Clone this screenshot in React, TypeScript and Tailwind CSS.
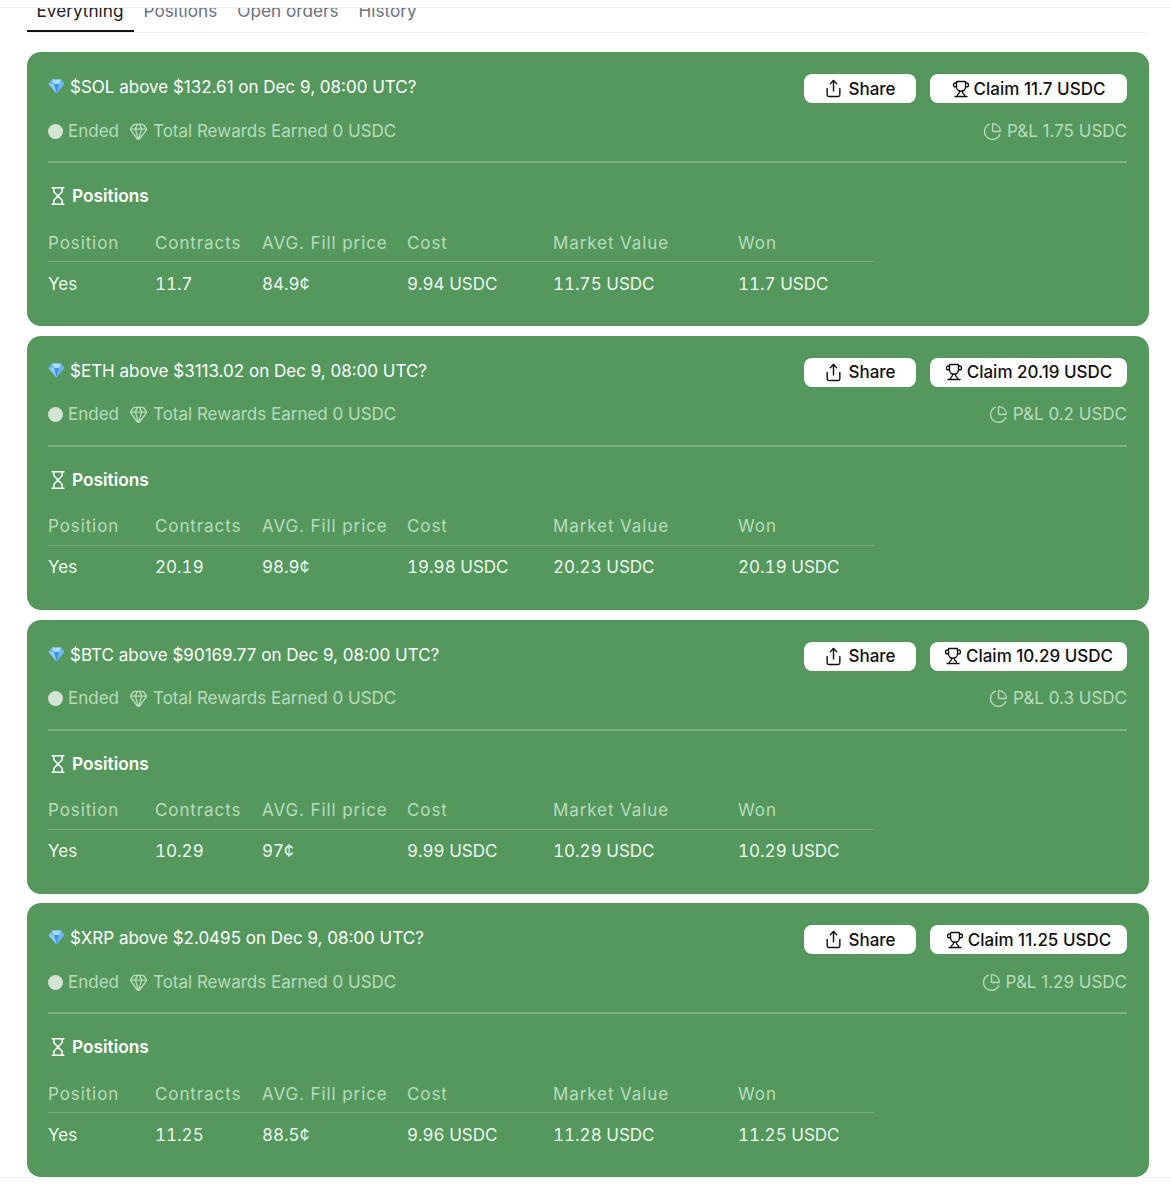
import { ChartPie, Gem, Hourglass, Share, Trophy } from "lucide-react";

const markets = [
  { title: "$SOL above $132.61 on Dec 9, 08:00 UTC?", claim: "11.7", pnl: "1.75", contracts: "11.7", fill: "84.9¢", cost: "9.94", value: "11.75" },
  { title: "$ETH above $3113.02 on Dec 9, 08:00 UTC?", claim: "20.19", pnl: "0.2", contracts: "20.19", fill: "98.9¢", cost: "19.98", value: "20.23" },
  { title: "$BTC above $90169.77 on Dec 9, 08:00 UTC?", claim: "10.29", pnl: "0.3", contracts: "10.29", fill: "97¢", cost: "9.99", value: "10.29" },
  { title: "$XRP above $2.0495 on Dec 9, 08:00 UTC?", claim: "11.25", pnl: "1.29", contracts: "11.25", fill: "88.5¢", cost: "9.96", value: "11.28" },
];

const tableCols = "grid grid-cols-[107px_107px_145px_146px_185px_136px] w-[826px]";

function BlueGem() {
  return (
    <svg width="17" height="15" viewBox="0 0 17 15" className="shrink-0">
      <path d="M4 0.5h9l3.5 4.5-8 9.5-8-9.5z" fill="#6db6f2" />
      <path d="M4 0.5h9l-2 4.5h-5z" fill="#a9dbfb" />
      <path d="M6 5h5l-2.5 9.5z" fill="#3f93e6" />
      <path d="M0.5 5h5.500l2.500 9.500z" fill="#8ccbf7" />
    </svg>
  );
}

function MarketCard({ market }: { market: (typeof markets)[number] }) {
  return (
    <div className="h-[274px] mb-[9.67px] last:mb-0 rounded-[14px] bg-[#54985d] pl-[21.5px] pr-[22px] pt-[22px]">
      <div className="flex justify-between h-[29px]">
        <div className="flex items-start gap-[5px] text-white text-[17px] leading-[24px] pt-[1px]">
          <span className="mt-[4px]"><BlueGem /></span>
          {market.title}
        </div>
        <div className="flex gap-[14px]">
          <button className="w-[112px] h-[29px] pt-[1px] rounded-[8px] bg-white text-[#111] text-[17px] font-medium flex items-center justify-center gap-[5px]">
            <Share size={19} strokeWidth={1.8} className="-mt-[1px]" />
            Share
          </button>
          <button className="w-[197px] h-[29px] pt-[1px] rounded-[8px] bg-white text-[#111] text-[17px] font-medium flex items-center justify-center gap-[4px]">
            <Trophy size={18} strokeWidth={1.8} className="-mt-[1px]" />
            Claim {market.claim} USDC
          </button>
        </div>
      </div>
      <div className="flex justify-between items-center h-[24px] mt-[16px] text-[17px] text-[#b9dcbc]">
        <div className="flex items-center">
          <span className="w-[15px] h-[15px] rounded-full bg-[#d3e3d4] mr-[5px]" />
          Ended
          <Gem size={19} strokeWidth={1.7} className="ml-[10px] mr-[5px]" />
          Total Rewards Earned 0 USDC
        </div>
        <div className="flex items-center gap-[5px]">
          <ChartPie size={19} strokeWidth={1.7} />
          P&L {market.pnl} USDC
        </div>
      </div>
      <div className="h-[2px] bg-[#7db284] mt-[18px]" />
      <div className="flex items-center gap-[4px] mt-[21px] h-[24px] text-white text-[17.3px] font-semibold">
        <Hourglass size={20} strokeWidth={1.8} />
        Positions
      </div>
      <div className={`${tableCols} mt-[14px] h-[40px] pt-[8.5px] border-b border-[#76ae7d] text-[17px] leading-[24px] tracking-[0.9px] text-[#b9dcbc]`}>
        <span>Position</span>
        <span>Contracts</span>
        <span>AVG. Fill price</span>
        <span>Cost</span>
        <span>Market Value</span>
        <span>Won</span>
      </div>
      <div className={`${tableCols} mt-[9.5px] text-[17px] leading-[24px] tabular-nums text-[#eef6ee]`}>
        <span>Yes</span>
        <span>{market.contracts}</span>
        <span>{market.fill}</span>
        <span>{market.cost} USDC</span>
        <span>{market.value} USDC</span>
        <span>{market.contracts} USDC</span>
      </div>
    </div>
  );
}

export default function App() {
  return (
    <div className="w-[1171px] h-[1200px] bg-white overflow-hidden font-['Inter',sans-serif]">
      <div className="h-[8px] bg-white border-b border-[#f0f0f0] relative z-10" />
      <div className="ml-[26.5px] mr-[22px] h-[25px] border-b border-[#f5f5f5] flex mb-[19.3px] text-[17.2px] leading-[24px]">
        <div className="h-[23px] w-[107px] border-b-2 border-[#111] flex justify-center text-[#222] box-content -mt-[1px]">
          <span className="-mt-[8px]">Everything</span>
        </div>
        <div className="ml-[10px] -mt-[9px] text-[#6b7280]">Positions</div>
        <div className="ml-[20px] -mt-[9px] text-[#6b7280]">Open orders</div>
        <div className="ml-[20px] -mt-[9px] text-[#6b7280]">History</div>
      </div>
      <div className="ml-[26.5px] mr-[22px]">
        {markets.map((market) => (
          <MarketCard key={market.title} market={market} />
        ))}
      </div>
      <div className="border-t border-[#f2f2f2]" />
    </div>
  );
}
